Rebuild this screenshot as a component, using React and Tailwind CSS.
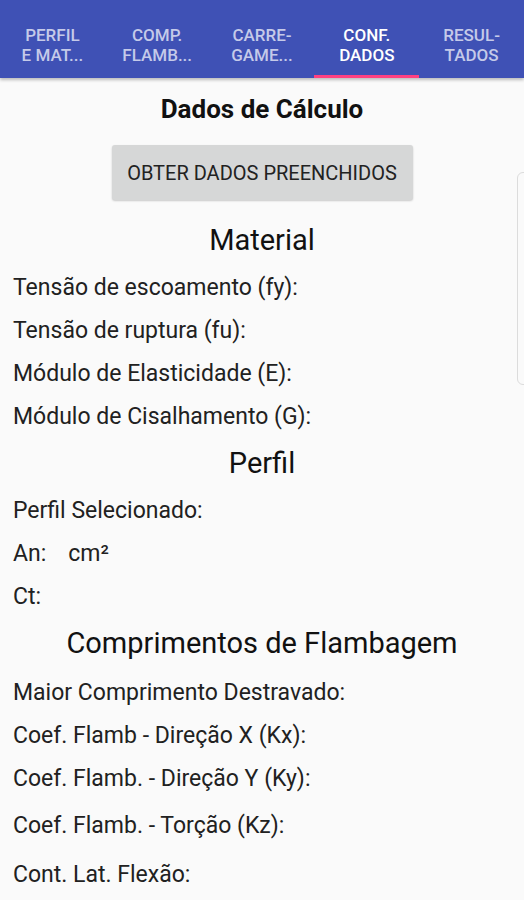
import React from 'react'

const tabs = [
  ['PERFIL', 'E MAT...'],
  ['COMP.', 'FLAMB...'],
  ['CARRE-', 'GAME...'],
  ['CONF.', 'DADOS'],
  ['RESUL-', 'TADOS'],
]

function Row({ children, className = '' }) {
  return <p className={`h-[43px] flex items-center text-[23px] text-[#212121] ${className}`}>{children}</p>
}

function Heading({ children, className = '' }) {
  return <h2 className={`text-center text-[#111] ${className}`}>{children}</h2>
}

export default function App() {
  return (
    <div className="relative w-[524px] h-[900px] overflow-hidden bg-[#fafafa]" style={{ fontFamily: 'Roboto, "Noto Sans", sans-serif' }}>
      {/* tab bar */}
      <div className="flex h-[78px] bg-[#3f51b5] shadow-[0_2px_3px_rgba(0,0,0,0.25)] relative z-10">
        {tabs.map(([a, b], i) => (
          <div key={i} className="relative flex-1 flex flex-col items-center justify-center pt-[11px]">
            <span className={`text-[17px] leading-[20px] font-medium text-center ${i === 3 ? 'text-white' : 'text-[#c5cae9]'}`}>
              {a}<br />{b}
            </span>
            {i === 3 && <div className="absolute bottom-0 left-0 right-0 h-[3px] bg-[#ff4081]" />}
          </div>
        ))}
      </div>

      <div className="px-[13px]">
        <Heading className="text-[26px] font-bold mt-[15px] leading-[32px]">Dados de Cálculo</Heading>
        <div className="flex justify-center mt-[20px]">
          <button className="w-[301px] h-[55px] rounded-[3px] bg-[#d6d7d7] shadow-[0_1px_2px_rgba(0,0,0,0.2)] text-[20px] text-[#222]">
            OBTER DADOS PREENCHIDOS
          </button>
        </div>
        <Heading className="text-[29px] mt-[22px] leading-[36px]">Material</Heading>
        <div className="mt-[9px]">
          <Row>Tensão de escoamento (fy):</Row>
          <Row>Tensão de ruptura (fu):</Row>
          <Row>Módulo de Elasticidade (E):</Row>
          <Row>Módulo de Cisalhamento (G):</Row>
        </div>
        <Heading className="text-[29px] leading-[36px] mt-[6px]">Perfil</Heading>
        <div className="mt-[9px]">
          <Row>Perfil Selecionado:</Row>
          <Row>An:<span className="ml-[22px]">cm²</span></Row>
          <Row>Ct:</Row>
        </div>
        <Heading className="text-[29px] leading-[36px] mt-[6px]">Comprimentos de Flambagem</Heading>
        <div className="mt-[11px]">
          <Row>Maior Comprimento Destravado:</Row>
          <Row>Coef. Flamb - Direção X (Kx):</Row>
          <Row>Coef. Flamb. - Direção Y (Ky):</Row>
          <Row className="h-[51px]">Coef. Flamb. - Torção (Kz):</Row>
          <Row className="h-[47px]">Cont. Lat. Flexão:</Row>
        </div>
      </div>

      {/* partially visible side card at right edge */}
      <div className="absolute left-[517px] top-[172px] w-[20px] h-[213px] rounded-[6px] border border-[#dcdcdc] bg-[#fafafa]" />
    </div>
  )
}
